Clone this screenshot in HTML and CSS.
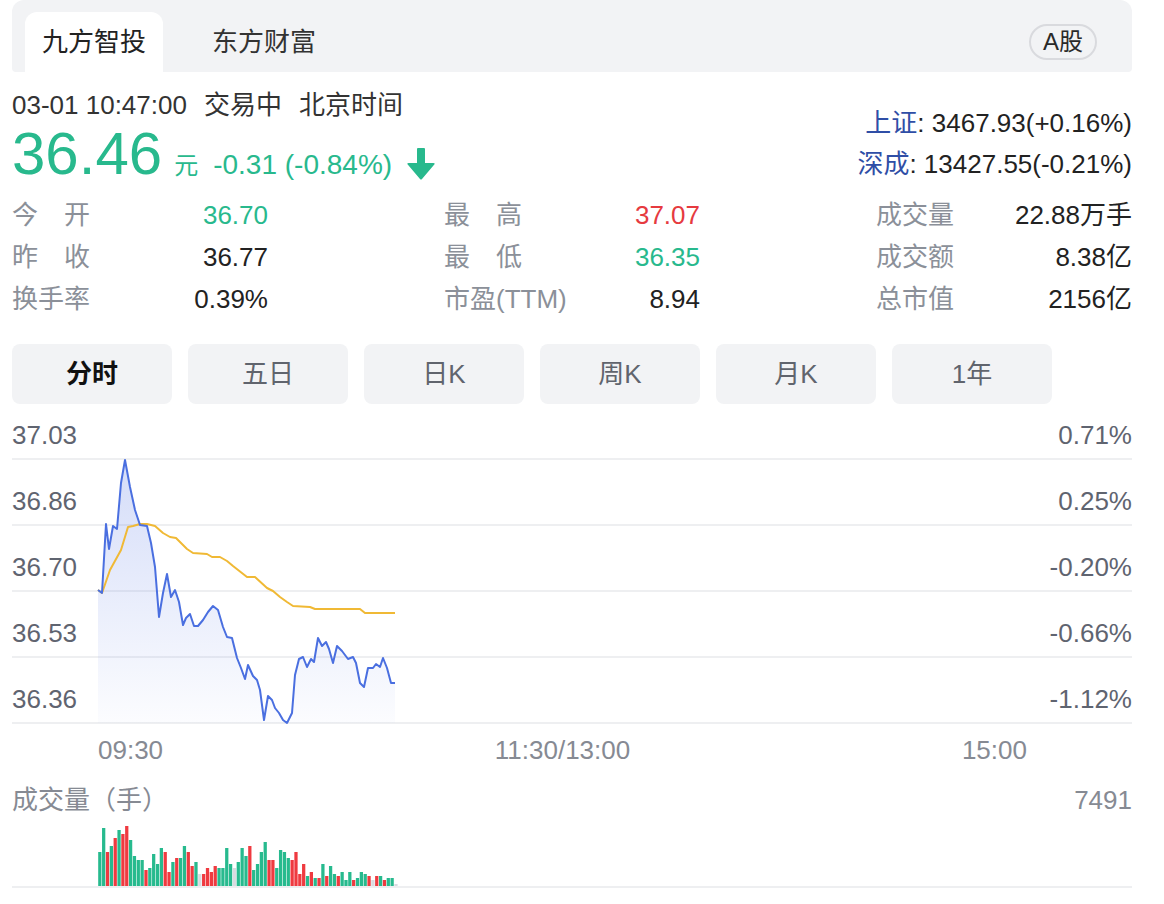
FILE: index.html
```html
<!DOCTYPE html>
<html lang="zh-CN">
<head>
<meta charset="utf-8">
<title>九方智投</title>
<link rel="stylesheet" href="styles.css">
</head>
<body>
<div class="page">
  <div class="tabbar">
    <div class="tab active">九方智投</div>
    <div class="tab">东方财富</div>
    <div class="market">A股</div>
  </div>

  <div class="header">
    <div class="head-left">
      <div class="time">03-01 10:47:00<span class="sp">交易中</span><span class="sp">北京时间</span></div>
      <div class="price-row">
        <span class="price">36.46</span>
        <span class="unit">元</span>
        <span class="change">-0.31 (-0.84%)</span>
        <svg class="arrow" width="30" height="32" viewBox="0 0 30 32"><path d="M11 1 Q11 0 12 0 H18 Q19 0 19 1 V15 H27.5 Q29.5 15 28.3 16.6 L16 31 Q15 32 14 31 L1.7 16.6 Q0.5 15 2.5 15 H11 Z"/></svg>
      </div>
    </div>
    <div class="head-right">
      <div class="idx"><span class="idx-name">上证</span>: 3467.93(+0.16%)</div>
      <div class="idx"><span class="idx-name">深成</span>: 13427.55(-0.21%)</div>
    </div>
  </div>

  <div class="stats">
    <div class="cell"><span class="lbl">今 开</span><span class="val up-g">36.70</span></div>
    <div class="cell"><span class="lbl">最 高</span><span class="val up-r">37.07</span></div>
    <div class="cell"><span class="lbl">成交量</span><span class="val">22.88万手</span></div>
    <div class="cell"><span class="lbl">昨 收</span><span class="val">36.77</span></div>
    <div class="cell"><span class="lbl">最 低</span><span class="val up-g">36.35</span></div>
    <div class="cell"><span class="lbl">成交额</span><span class="val">8.38亿</span></div>
    <div class="cell"><span class="lbl">换手率</span><span class="val">0.39%</span></div>
    <div class="cell"><span class="lbl">市盈(TTM)</span><span class="val">8.94</span></div>
    <div class="cell"><span class="lbl">总市值</span><span class="val">2156亿</span></div>
  </div>

  <div class="periods">
    <div class="pbtn active">分时</div>
    <div class="pbtn">五日</div>
    <div class="pbtn">日K</div>
    <div class="pbtn">周K</div>
    <div class="pbtn">月K</div>
    <div class="pbtn">1年</div>
  </div>

  <div class="chart">
    <div class="grow first"><span>37.03</span><span>0.71%</span></div>
    <div class="grow"><span>36.86</span><span>0.25%</span></div>
    <div class="grow"><span>36.70</span><span>-0.20%</span></div>
    <div class="grow"><span>36.53</span><span>-0.66%</span></div>
    <div class="grow"><span>36.36</span><span>-1.12%</span></div>
    <svg class="plot" width="1120" height="320" viewBox="12 404 1120 320">
      <defs>
        <linearGradient id="fillg" gradientUnits="userSpaceOnUse" x1="0" y1="460" x2="0" y2="724">
          <stop offset="0" stop-color="#5b7be6" stop-opacity="0.26"/>
          <stop offset="1" stop-color="#5b7be6" stop-opacity="0.02"/>
        </linearGradient>
      </defs>
      <path class="area" d="M98,590 L102,593 106,524 109,549 113,526 117,529 121,483 125,460 130,487 135,510 140,525 147,526 151,543 155,567 159,617 163,593 167,574 171,597 175,590 179,602 183,625 186,618 190,614 194,626 198,626 203,620 208,612 213,606 218,610 223,627 227,637 232,638 237,658 241,668 245,679 248,665 253,676 257,680 260,690 264,720 268,696 272,700 275,708 279,713 283,720 287,723 292,713 295,675 299,659 303,657 307,667 311,659 314,662 318,638 322,646 326,642 329,649 333,663 337,646 342,651 348,659 353,657 356,663 360,683 364,687 368,668 373,668 376,664 380,667 383,658 387,668 391,683 395,683 L395,723 L98,723 Z"/>
      <polyline class="avg" points="98,590 102,593 110,570 121,550 128,527 133,526 140,524 147,524 155,526 163,533 170,537 176,538 182,544 187,549 193,553 207,554 212,557 220,557 227,561 233,566 247,577 255,577 267,588 273,591 280,597 287,602 293,606 310,607 315,609 360,609 365,613 395,613"/>
      <polyline class="line" points="98,590 102,593 106,524 109,549 113,526 117,529 121,483 125,460 130,487 135,510 140,525 147,526 151,543 155,567 159,617 163,593 167,574 171,597 175,590 179,602 183,625 186,618 190,614 194,626 198,626 203,620 208,612 213,606 218,610 223,627 227,637 232,638 237,658 241,668 245,679 248,665 253,676 257,680 260,690 264,720 268,696 272,700 275,708 279,713 283,720 287,723 292,713 295,675 299,659 303,657 307,667 311,659 314,662 318,638 322,646 326,642 329,649 333,663 337,646 342,651 348,659 353,657 356,663 360,683 364,687 368,668 373,668 376,664 380,667 383,658 387,668 391,683 395,683"/>
    </svg>
  </div>

  <div class="taxis">
    <span>09:30</span><span>11:30/13:00</span><span>15:00</span>
  </div>

  <div class="vol-head"><span>成交量（手）</span><span>7491</span></div>
  <div class="vol-bars">
    <svg class="vol-svg" width="300" height="60" viewBox="0 0 78 60" preserveAspectRatio="none">
      <rect class="g" x="0.05" y="26" width="0.85" height="34"/>
      <rect class="g" x="1.05" y="2" width="0.85" height="58"/>
      <rect class="r" x="2.05" y="26" width="0.85" height="34"/>
      <rect class="g" x="3.05" y="20" width="0.85" height="40"/>
      <rect class="r" x="4.05" y="12" width="0.85" height="48"/>
      <rect class="g" x="5.05" y="4" width="0.85" height="56"/>
      <rect class="r" x="6.05" y="8" width="0.85" height="52"/>
      <rect class="r" x="7.05" y="0" width="0.85" height="60"/>
      <rect class="g" x="8.05" y="14" width="0.85" height="46"/>
      <rect class="g" x="9.05" y="30" width="0.85" height="30"/>
      <rect class="g" x="10.05" y="34" width="0.85" height="26"/>
      <rect class="g" x="11.05" y="34" width="0.85" height="26"/>
      <rect class="r" x="12.05" y="44" width="0.85" height="16"/>
      <rect class="g" x="13.05" y="42" width="0.85" height="18"/>
      <rect class="g" x="14.05" y="28" width="0.85" height="32"/>
      <rect class="g" x="15.05" y="38" width="0.85" height="22"/>
      <rect class="g" x="16.05" y="22" width="0.85" height="38"/>
      <rect class="r" x="17.05" y="26" width="0.85" height="34"/>
      <rect class="r" x="18.05" y="46" width="0.85" height="14"/>
      <rect class="g" x="19.05" y="36" width="0.85" height="24"/>
      <rect class="r" x="20.05" y="32" width="0.85" height="28"/>
      <rect class="g" x="21.05" y="32" width="0.85" height="28"/>
      <rect class="g" x="22.05" y="20" width="0.85" height="40"/>
      <rect class="r" x="23.05" y="26" width="0.85" height="34"/>
      <rect class="r" x="24.05" y="40" width="0.85" height="20"/>
      <rect class="g" x="25.05" y="36" width="0.85" height="24"/>
      <rect class="n" x="26.05" y="48" width="0.85" height="12"/>
      <rect class="r" x="27.05" y="48" width="0.85" height="12"/>
      <rect class="r" x="28.05" y="42" width="0.85" height="18"/>
      <rect class="r" x="29.05" y="46" width="0.85" height="14"/>
      <rect class="r" x="30.05" y="40" width="0.85" height="20"/>
      <rect class="g" x="31.05" y="42" width="0.85" height="18"/>
      <rect class="g" x="32.05" y="42" width="0.85" height="18"/>
      <rect class="g" x="33.05" y="22" width="0.85" height="38"/>
      <rect class="g" x="34.05" y="38" width="0.85" height="22"/>
      <rect class="n" x="35.05" y="42" width="0.85" height="18"/>
      <rect class="g" x="36.05" y="36" width="0.85" height="24"/>
      <rect class="g" x="37.05" y="22" width="0.85" height="38"/>
      <rect class="g" x="38.05" y="30" width="0.85" height="30"/>
      <rect class="r" x="39.05" y="20" width="0.85" height="40"/>
      <rect class="g" x="40.05" y="44" width="0.85" height="16"/>
      <rect class="g" x="41.05" y="38" width="0.85" height="22"/>
      <rect class="g" x="42.05" y="26" width="0.85" height="34"/>
      <rect class="g" x="43.05" y="16" width="0.85" height="44"/>
      <rect class="r" x="44.05" y="34" width="0.85" height="26"/>
      <rect class="r" x="45.05" y="34" width="0.85" height="26"/>
      <rect class="g" x="46.05" y="42" width="0.85" height="18"/>
      <rect class="g" x="47.05" y="24" width="0.85" height="36"/>
      <rect class="g" x="48.05" y="26" width="0.85" height="34"/>
      <rect class="g" x="49.05" y="32" width="0.85" height="28"/>
      <rect class="r" x="50.05" y="34" width="0.85" height="26"/>
      <rect class="r" x="51.05" y="26" width="0.85" height="34"/>
      <rect class="r" x="52.05" y="48" width="0.85" height="12"/>
      <rect class="r" x="53.05" y="38" width="0.85" height="22"/>
      <rect class="g" x="54.05" y="50" width="0.85" height="10"/>
      <rect class="r" x="55.05" y="46" width="0.85" height="14"/>
      <rect class="g" x="56.05" y="52" width="0.85" height="8"/>
      <rect class="r" x="57.05" y="52" width="0.85" height="8"/>
      <rect class="g" x="58.05" y="38" width="0.85" height="22"/>
      <rect class="r" x="59.05" y="50" width="0.85" height="10"/>
      <rect class="g" x="60.05" y="40" width="0.85" height="20"/>
      <rect class="g" x="61.05" y="48" width="0.85" height="12"/>
      <rect class="r" x="62.05" y="50" width="0.85" height="10"/>
      <rect class="g" x="63.05" y="46" width="0.85" height="14"/>
      <rect class="g" x="64.05" y="54" width="0.85" height="6"/>
      <rect class="g" x="65.05" y="46" width="0.85" height="14"/>
      <rect class="r" x="66.05" y="54" width="0.85" height="6"/>
      <rect class="g" x="67.05" y="52" width="0.85" height="8"/>
      <rect class="g" x="68.05" y="46" width="0.85" height="14"/>
      <rect class="g" x="69.05" y="48" width="0.85" height="12"/>
      <rect class="r" x="70.05" y="50" width="0.85" height="10"/>
      <rect class="n" x="71.05" y="54" width="0.85" height="6"/>
      <rect class="r" x="72.05" y="50" width="0.85" height="10"/>
      <rect class="g" x="73.05" y="50" width="0.85" height="10"/>
      <rect class="r" x="74.05" y="54" width="0.85" height="6"/>
      <rect class="g" x="75.05" y="52" width="0.85" height="8"/>
      <rect class="g" x="76.05" y="52" width="0.85" height="8"/>
      <rect class="n" x="77.05" y="58" width="0.85" height="2"/>
    </svg>
  </div>
</div>
</body>
</html>
```

FILE: styles.css
```css
* { box-sizing: border-box; }

html, body {
  margin: 0;
  padding: 0;
  background: #ffffff;
}

body {
  font-family: "Liberation Sans", "Noto Sans CJK SC", sans-serif;
  color: #222222;
  font-size: 26px;
}

.page {
  width: 1120px;
  margin-left: 12px;
}

/* Top source tabs */
.tabbar {
  display: flex;
  align-items: stretch;
  height: 72px;
  padding: 12px 35px 0 13px;
  gap: 32px;
  background: #f2f3f5;
  border-radius: 12px 12px 4px 4px;
}

.tab {
  padding: 0 17px;
  line-height: 60px;
  font-size: 26px;
  color: #333333;
  border-radius: 12px 12px 0 0;
}

.tab.active {
  background: #ffffff;
  color: #222222;
}

.market {
  margin-left: auto;
  align-self: center;
  height: 36px;
  line-height: 32px;
  padding: 0 12px;
  font-size: 24px;
  color: #2a2a2a;
  border: 2px solid #d9dade;
  border-radius: 18px;
}

/* Quote header */
.header {
  display: flex;
  justify-content: space-between;
  align-items: flex-end;
  margin-top: 18px;
}

.time {
  line-height: 30px;
  font-size: 26px;
  color: #333333;
}

.time .sp {
  margin-left: 17px;
}

.price-row {
  display: flex;
  align-items: baseline;
  margin-top: 3px;
  height: 62px;
  color: #28b98d;
}

.price {
  font-size: 60px;
  line-height: 62px;
}

.unit {
  font-size: 24px;
  margin-left: 12px;
}

.change {
  font-size: 28px;
  margin-left: 15px;
}

.arrow {
  align-self: flex-start;
  margin-top: 25px;
  margin-left: 14px;
  fill: #28b98d;
}

.head-right {
  text-align: right;
}

.idx {
  line-height: 41px;
  font-size: 26px;
  color: #222222;
}

.idx-name {
  color: #2f4ea6;
}

/* Stats grid */
.stats {
  display: grid;
  grid-template-columns: repeat(3, 256px);
  column-gap: 176px;
  margin-top: 9px;
}

.cell {
  display: flex;
  justify-content: space-between;
  height: 42px;
  line-height: 42px;
}

.lbl {
  min-width: 78px;
  color: #8b9099;
  text-align: justify;
  text-align-last: justify;
}

.val {
  color: #222222;
}

.up-g { color: #28b98d; }
.up-r { color: #e63a3f; }

/* Period buttons */
.periods {
  display: flex;
  gap: 16px;
  margin-top: 24px;
}

.pbtn {
  width: 160px;
  height: 60px;
  line-height: 60px;
  text-align: center;
  background: #f2f3f5;
  border-radius: 8px;
  color: #60646d;
}

.pbtn.active {
  color: #111111;
  font-weight: bold;
}

/* Time-share chart */
.chart {
  position: relative;
  height: 320px;
}

.grow {
  display: flex;
  justify-content: space-between;
  align-items: flex-end;
  height: 66px;
  padding-bottom: 8px;
  line-height: 30px;
  border-bottom: 2px solid #eeeff1;
  color: #5f6470;
}

.grow.first {
  height: 56px;
}

.plot {
  position: absolute;
  left: 0;
  top: 0;
  overflow: visible;
}

.plot .area {
  fill: url(#fillg);
  stroke: none;
}

.plot .line {
  fill: none;
  stroke: #4a6fe0;
  stroke-width: 2;
  stroke-linejoin: round;
}

.plot .avg {
  fill: none;
  stroke: #f0b935;
  stroke-width: 2;
  stroke-linejoin: round;
}

.taxis {
  display: flex;
  justify-content: space-between;
  height: 61px;
  padding: 11px 105px 0 86px;
  line-height: 30px;
  color: #868a93;
}

.vol-head {
  display: flex;
  justify-content: space-between;
  line-height: 30px;
  color: #868a93;
}

.vol-bars {
  height: 73px;
  padding: 11px 0 0 86px;
  border-bottom: 2px solid #eeeff1;
}

.vol-svg {
  display: block;
}

.vol-svg .g { fill: #27ba8e; }
.vol-svg .r { fill: #ef3a40; }
.vol-svg .n { fill: #d9dbe0; }
```
